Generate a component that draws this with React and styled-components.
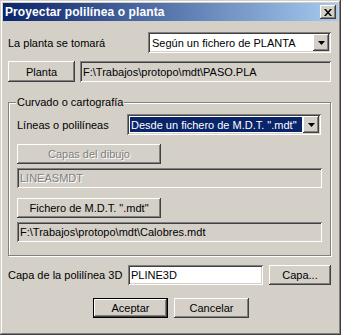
import styled, { createGlobalStyle } from 'styled-components';

const Global = createGlobalStyle`
  html, body {
    margin: 0;
    padding: 0;
    background: #d4d0c8;
  }
`;

const raised = `
  box-shadow: inset -1px -1px #404040, inset 1px 1px #ffffff,
    inset -2px -2px #808080, inset 2px 2px #d4d0c8;
`;

const sunken = `
  box-shadow: inset 1px 1px #808080, inset -1px -1px #ffffff,
    inset 2px 2px #404040, inset -2px -2px #d4d0c8;
`;

const Window = styled.div`
  width: 341px;
  height: 335px;
  box-sizing: border-box;
  padding: 3px;
  background: #d4d0c8;
  box-shadow: inset -1px -1px #404040, inset 1px 1px #d4d0c8,
    inset -2px -2px #808080, inset 2px 2px #ffffff;
  display: flex;
  flex-direction: column;
  font-family: 'Liberation Sans', Arial, sans-serif;
  font-size: 11px;
  color: #000;
`;

const TitleBar = styled.div`
  height: 18px;
  display: flex;
  align-items: center;
  padding: 0 2px 0 2px;
  background: linear-gradient(to right, #0a246a, #a6caf0);
`;

const Title = styled.span`
  flex: 1;
  color: #fff;
  font-weight: bold;
  font-size: 12px;
  letter-spacing: 0.1px;
`;

const CloseButton = styled.div`
  width: 16px;
  height: 14px;
  background: #d4d0c8;
  ${raised}
  display: flex;
  align-items: center;
  justify-content: center;
`;

const Client = styled.div`
  display: flex;
  flex-direction: column;
  padding: 0 7px 0 5px;
`;

const Row = styled.div`
  display: flex;
  align-items: center;
  margin-top: ${(p) => p.$top || 0}px;
  height: ${(p) => p.$h || 21}px;
`;

const Label = styled.span`
  width: ${(p) => (p.$w ? `${p.$w}px` : 'auto')};
  flex: ${(p) => (p.$w ? 'none' : '1')};
  white-space: nowrap;
`;

const Button = styled.div`
  box-sizing: border-box;
  width: ${(p) => p.$w}px;
  height: ${(p) => p.$h || 20}px;
  flex: none;
  background: #d4d0c8;
  ${raised}
  display: flex;
  align-items: center;
  justify-content: center;
  color: ${(p) => (p.$disabled ? '#808080' : '#000')};
  text-shadow: ${(p) => (p.$disabled ? '1px 1px 0 #ffffff' : 'none')};
  margin-left: ${(p) => p.$ml || 0}px;
`;

const DefaultButton = styled(Button)`
  box-shadow: inset 0 0 0 1px #000, inset -2px -2px #404040,
    inset 2px 2px #ffffff, inset -3px -3px #808080, inset 3px 3px #d4d0c8;
`;

const Field = styled.div`
  box-sizing: border-box;
  height: ${(p) => p.$h || 20}px;
  flex: ${(p) => (p.$w ? 'none' : '1')};
  width: ${(p) => (p.$w ? `${p.$w}px` : 'auto')};
  margin-left: ${(p) => p.$ml || 0}px;
  background: ${(p) => (p.$white ? '#ffffff' : '#d4d0c8')};
  ${sunken}
  display: flex;
  align-items: center;
  padding: 0 3px;
  white-space: nowrap;
  overflow: hidden;
  color: ${(p) => (p.$disabled ? '#808080' : '#000')};
  text-shadow: ${(p) => (p.$disabled ? '1px 1px 0 #ffffff' : 'none')};
`;

const Combo = styled.div`
  box-sizing: border-box;
  width: ${(p) => p.$w}px;
  height: 21px;
  flex: none;
  margin-left: auto;
  margin-right: ${(p) => p.$mr || 0}px;
  background: #fff;
  ${sunken}
  padding: 2px;
  display: flex;
`;

const ComboText = styled.div`
  flex: 1;
  margin: 1px 1px 1px 1px;
  padding-left: 1px;
  display: flex;
  align-items: center;
  white-space: nowrap;
  overflow: hidden;
  background: ${(p) => (p.$selected ? '#0a246a' : 'transparent')};
  color: ${(p) => (p.$selected ? '#ffffff' : '#000')};
`;

const ComboButton = styled.div`
  width: 16px;
  flex: none;
  background: #d4d0c8;
  ${raised}
  display: flex;
  align-items: center;
  justify-content: center;
`;

const Group = styled.fieldset`
  margin: 14px 0 0 0;
  padding: 5px 8px 13px 8px;
  border: 1px solid #808080;
  box-shadow: 1px 1px 0 #ffffff, inset 1px 1px 0 #ffffff;
  display: flex;
  flex-direction: column;
  min-width: 0;
`;

const Legend = styled.legend`
  padding: 0 1px;
  margin-left: -1px;
  line-height: 13px;
  background: #d4d0c8;
`;

const Footer = styled.div`
  display: flex;
  justify-content: center;
  gap: 6px;
  margin-top: 13px;
  padding-left: 3px;
`;

const Arrow = () => (
  <svg width="7" height="4" viewBox="0 0 7 4">
    <polygon points="0,0 7,0 3.5,4" fill="#000" />
  </svg>
);

const CloseIcon = () => (
  <svg width="8" height="7" viewBox="0 0 8 7">
    <path d="M0 0 L2 0 L4 2.5 L6 0 L8 0 L5 3.5 L8 7 L6 7 L4 4.5 L2 7 L0 7 L3 3.5 Z" fill="#000" />
  </svg>
);

const App = () => {
  return (
    <>
      <Global />
      <Window>
        <TitleBar>
          <Title>Proyectar polilínea o planta</Title>
          <CloseButton>
            <CloseIcon />
          </CloseButton>
        </TitleBar>
        <Client>
          <Row $top={11}>
            <Label>La planta se tomará</Label>
            <Combo $w={183}>
              <ComboText>Según un fichero de PLANTA</ComboText>
              <ComboButton>
                <Arrow />
              </ComboButton>
            </Combo>
          </Row>
          <Row $top={8}>
            <Button $w={67} $h={21}>Planta</Button>
            <Field $ml={5} $h={21}>F:\Trabajos\protopo\mdt\PASO.PLA</Field>
          </Row>
          <Group>
            <Legend>Curvado o cartografía</Legend>
            <Row>
              <Label>Líneas o polilíneas</Label>
              <Combo $w={194} $mr={1}>
                <ComboText $selected>Desde un fichero de M.D.T. ".mdt"</ComboText>
                <ComboButton>
                  <Arrow />
                </ComboButton>
              </Combo>
            </Row>
            <Row $top={9} $h={20}>
              <Button $w={144} $disabled>Capas del dibujo</Button>
            </Row>
            <Row $top={4} $h={20}>
              <Field $disabled>LINEASMDT</Field>
            </Row>
            <Row $top={10} $h={20}>
              <Button $w={144}>Fichero de M.D.T. ".mdt"</Button>
            </Row>
            <Row $top={4} $h={20}>
              <Field>F:\Trabajos\protopo\mdt\Calobres.mdt</Field>
            </Row>
          </Group>
          <Row $top={9} $h={20}>
            <Label $w={120}>Capa de la polilínea 3D</Label>
            <Field $w={135} $white>PLINE3D</Field>
            <Button $w={62} $ml={6}>Capa...</Button>
          </Row>
          <Footer>
            <DefaultButton $w={75}>Aceptar</DefaultButton>
            <Button $w={75}>Cancelar</Button>
          </Footer>
        </Client>
      </Window>
    </>
  );
};

export default App;
